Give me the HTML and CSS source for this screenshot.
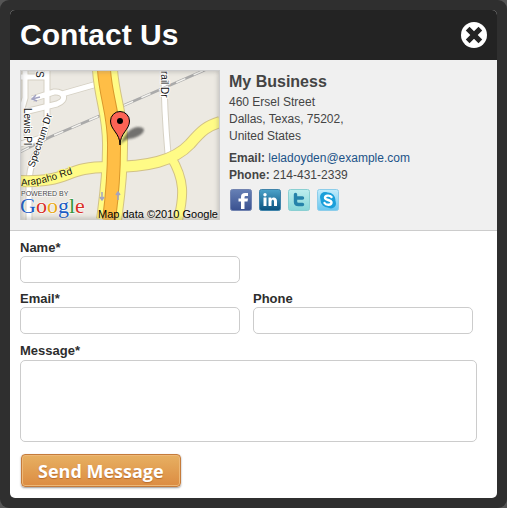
FILE: index.html
```html
<!DOCTYPE html>
<html lang="en">
<head>
<meta charset="utf-8">
<meta name="viewport" content="width=device-width, initial-scale=1">
<title>Contact Us</title>
<link rel="stylesheet" href="styles.css">
</head>
<body>
<main class="dialog">
  <div class="panel">
    <header class="header">
      <h1 class="title">Contact Us</h1>
      <button class="close" type="button" aria-label="Close">
        <svg viewBox="0 0 26 26" width="26" height="26">
          <circle cx="13" cy="13" r="13" fill="#fff"/>
          <path d="M8.500 4.800 13 9.300 17.500 4.800 21.200 8.500 16.700 13 21.200 17.500 17.500 21.200 13 16.700 8.500 21.200 4.800 17.500 9.300 13 4.800 8.500Z" fill="#232323"/>
        </svg>
      </button>
    </header>

    <section class="info">
      <svg class="map" viewBox="20 70 200 150" width="200" height="150" role="img" aria-label="Map">
        <defs>
          <filter id="blur" x="-30%" y="-50%" width="160%" height="200%"><feGaussianBlur stdDeviation="1"/></filter>
          <filter id="soft" x="-10%" y="-10%" width="120%" height="120%"><feGaussianBlur stdDeviation="2"/></filter>
        </defs>
        <rect x="20" y="70" width="200" height="150" fill="#ece9e2"/>
        <g fill="none">
          <path stroke="#d6d1c4" stroke-width="7" d="M25 70V98L21 112V140M47 70V118C47 140 31 152 29 180V220M20 77H46M20 113 57 104C68 100 64 91 54 92L32 99M62 94 97 84M164 70C164 95 165 120 168 154M20 144 45 137"/>
          <path stroke="#fff" stroke-width="5" d="M25 70V98L21 112V140M47 70V118C47 140 31 152 29 180V220M20 77H46M20 113 57 104C68 100 64 91 54 92L32 99M62 94 97 84M164 70C164 95 165 120 168 154M20 144 45 137"/>
          <path stroke="#aaa" stroke-width="2.600" d="M20 152 50 137 97 117 205 70"/>
          <path stroke="#f5f4f0" stroke-width="1.400" stroke-dasharray="10 9" d="M20 152 50 137 97 117 205 70"/>
          <g stroke="#d2c286">
            <path stroke-width="26" d="M105 70C107 99 116 116 115 148C115 178 112 197 109 220"/>
            <path stroke-width="12" d="M20 181C70 183 64 167 108 167C148 167 174 161 190 144C202 130 207 126 220 122"/>
            <path stroke-width="10" d="M171 157C185 180 184 196 178 220"/>
          </g>
          <g stroke="#fffb86">
            <path stroke-width="24" d="M105 70C107 99 116 116 115 148C115 178 112 197 109 220"/>
            <path stroke-width="10" d="M20 181C70 183 64 167 108 167C148 167 174 161 190 144C202 130 207 126 220 122"/>
            <path stroke-width="8" d="M171 157C185 180 184 196 178 220"/>
          </g>
          <path stroke="#d9972b" stroke-width="14" d="M104 70C106 99 115 116 114 148C114 178 112 197 109 220"/>
          <path stroke="#ffbe46" stroke-width="12" d="M104 70C106 99 115 116 114 148C114 178 112 197 109 220"/>
          <path stroke="#a3a3c2" stroke-width="1.500" d="M32 99 40 97M36 95 32 99 37 101M102 192V200M100 197 102 200 104 197M118 200V192M116 195 118 192 120 195"/>
        </g>
        <path d="M120 145C124 135 130 127 139 127C149 128 142 136 134 138C128 139 124 140 120 145Z" fill="#333" opacity=".65" filter="url(#blur)"/>
        <path d="M120 145C120 133 110.500 130 110.500 121A9.300 9.300 0 0 1 129.500 121C129.500 130 120 133 120 145Z" fill="#fc6355" stroke="#000"/>
        <circle cx="120" cy="121" r="3" fill="#000"/>
        <g class="road-name">
          <text transform="translate(36 71) rotate(90)">S</text>
          <text transform="translate(24 108) rotate(90)">Lewis Pl</text>
          <text transform="translate(34 168) rotate(-71)">Spectrum Dr</text>
          <text transform="translate(161 71) rotate(90)">rail Dr</text>
        </g>
        <path id="arapaho" fill="none" d="M21 186C48 184 54 179 80 172"/>
        <text class="road-name road-name-major"><textPath href="#arapaho">Arapaho Rd</textPath></text>
        <text class="powered" x="21" y="196">POWERED BY</text>
        <text class="google" x="20" y="213"><tspan fill="#1b5cc4">G</tspan><tspan fill="#d93025">o</tspan><tspan fill="#e9a914">o</tspan><tspan fill="#1b5cc4">g</tspan><tspan fill="#35963b">l</tspan><tspan fill="#d93025">e</tspan></text>
        <text class="copyright" x="218" y="218">Map data ©2010 Google</text>
        <rect x="20" y="70" width="200" height="150" fill="none" stroke="#777" stroke-width="3" opacity=".5" filter="url(#soft)"/>
        <path d="M20.500 220V70.500H219.500V220" fill="none" stroke="#ccc"/>
      </svg>

      <div class="details">
        <h2 class="business">My Business</h2>
        <address class="address">460 Ersel Street<br>Dallas, Texas, 75202,<br>United States</address>
        <p class="contact"><b>Email:</b> <a href="mailto:leladoyden@example.com">leladoyden@example.com</a><br><b>Phone:</b> 214-431-2339</p>
        <nav class="social" aria-label="Social links">
          <a href="#" aria-label="Facebook"><svg viewBox="0 0 22 22" width="22" height="22">
            <defs><linearGradient id="fb" x2="0" y2="1"><stop stop-color="#6680b5"/><stop offset="1" stop-color="#3a5190"/></linearGradient></defs>
            <rect x=".5" y=".5" width="21" height="21" rx="2" fill="url(#fb)" stroke="#7183b0"/>
            <path d="M11 20V12.500H8.500V9.500H11V8C11 5 12.500 4 15 4H18V7H16C14.800 7 14.500 7.500 14.500 8.500V9.500H18L17.500 12.500H14.500V20Z" fill="#fff"/></svg></a>
          <a href="#" aria-label="LinkedIn"><svg viewBox="0 0 22 22" width="22" height="22">
            <defs><linearGradient id="li" x2="0" y2="1"><stop stop-color="#4ba2c9"/><stop offset="1" stop-color="#0b527f"/></linearGradient></defs>
            <rect x=".5" y=".5" width="21" height="21" rx="2" fill="url(#li)" stroke="#3f83aa"/>
            <path d="M4.500 8.500H7.500V17H4.500ZM9.500 8.500H12.300V9.700C14 7.500 18 8 18 12V17H15V12.500C15 10 12.500 10.200 12.500 12.500V17H9.500Z" fill="#fff"/><circle cx="6" cy="5.700" r="1.700" fill="#fff"/></svg></a>
          <a href="#" aria-label="Twitter"><svg viewBox="0 0 22 22" width="22" height="22">
            <defs><linearGradient id="tw" x2="0" y2="1"><stop stop-color="#bdeeee"/><stop offset="1" stop-color="#86d6d8"/></linearGradient></defs>
            <rect x=".5" y=".5" width="21" height="21" rx="2" fill="url(#tw)" stroke="#8acfd2"/>
            <path d="M7.500 5.500V13Q7.500 15.500 10.500 15.500H14.500M8 9H14.500" fill="none" stroke="#2583aa" stroke-width="3.400" stroke-linecap="round"/></svg></a>
          <a href="#" aria-label="Skype"><svg viewBox="0 0 22 22" width="22" height="22">
            <defs><linearGradient id="sk" x2="0" y2="1"><stop stop-color="#c2ecfb"/><stop offset="1" stop-color="#67c6ef"/></linearGradient></defs>
            <rect x=".5" y=".5" width="21" height="21" rx="2" fill="url(#sk)" stroke="#8ccdea"/>
            <circle cx="8" cy="8" r="5" fill="#1a9fda"/><circle cx="14" cy="14.500" r="5" fill="#1a9fda"/><circle cx="11" cy="11" r="7.500" fill="#1a9fda"/>
            <path d="M14.500 8C13 6 8 6 8 8.800C8 11.500 14.500 10.500 14.500 13.500C14.500 16.500 9 16.500 7.500 14" fill="none" stroke="#fff" stroke-width="2.400" stroke-linecap="round"/></svg></a>
        </nav>
      </div>
    </section>

    <form class="form">
      <div class="field name"><label for="name">Name*</label><input id="name" type="text" required></div>
      <div class="field"><label for="email">Email*</label><input id="email" type="email" required></div>
      <div class="field"><label for="phone">Phone</label><input id="phone" type="tel"></div>
      <div class="field message"><label for="message">Message*</label><textarea id="message" required></textarea></div>
      <button class="send" type="submit">Send Message</button>
    </form>
  </div>
</main>
</body>
</html>
```
FILE: styles.css
```css
* {
  box-sizing: border-box;
}

body {
  margin: 0;
  background: #555;
  color: #444;
  font: 12px/17px "Liberation Sans", Arial, sans-serif;
}

h1, h2, p {
  margin: 0;
}

.dialog {
  min-height: 100vh;
  display: flex;
  padding: 10px;
  background: #2f2f2f;
  border-radius: 9px;
}

.panel {
  flex: 1;
  min-width: 0;
  background: #fff;
  border-radius: 5px;
  overflow: hidden;
}

.header {
  display: flex;
  align-items: center;
  justify-content: space-between;
  height: 50px;
  padding: 0 10px;
  background: #232323;
}

.title {
  color: #fff;
  font-size: 30px;
  line-height: 52px;
}

.close {
  display: block;
  padding: 0;
  border: 0;
  background: none;
  cursor: pointer;
}

.close svg, .social svg {
  display: block;
}

.info {
  display: flex;
  gap: 9px;
  padding: 10px;
  background: #f0f0f0;
  border-bottom: 1px solid #ccc;
}

.map {
  display: block;
  flex: none;
}

.map text {
  font-family: "Liberation Sans", Arial, sans-serif;
}

.map .road-name {
  font-size: 10px;
  fill: #111;
  stroke: #fff;
  stroke-width: 2px;
  paint-order: stroke;
}

.map .road-name-major {
  stroke: #fffb86;
}

.map .powered {
  font-size: 7px;
  fill: #444;
  stroke: #fff;
  stroke-width: 1px;
  paint-order: stroke;
}

.map .google {
  font: 22px "Liberation Serif", serif;
  stroke: #fff;
  stroke-width: 1px;
  paint-order: stroke;
}

.map .copyright {
  font-size: 11px;
  text-anchor: end;
  fill: #000;
}

.business {
  font-size: 16px;
  line-height: 24px;
}

.address {
  font-style: normal;
}

.contact {
  margin-top: 5px;
}

.contact a {
  color: #1c5388;
  text-decoration: none;
}

.social {
  display: flex;
  gap: 7px;
  margin-top: 5px;
  padding-left: 1px;
}

.form {
  display: grid;
  grid-template-columns: 1fr 1fr;
  column-gap: 13px;
  row-gap: 7px;
  padding: 8px 24px 10px 10px;
}

.field {
  display: flex;
  flex-direction: column;
}

.name {
  grid-column: 1;
}

.name + .field {
  grid-column: 1;
}

.message {
  grid-column: 1 / -1;
  margin: 1px -4px 0 0;
}

.field label {
  color: #2d2d2d;
  font-size: 13px;
  font-weight: bold;
}

.field input, .field textarea {
  display: block;
  width: 100%;
  height: 27px;
  padding: 4px 6px;
  border: 1px solid #ccc;
  border-radius: 5px;
  background: #fff;
  font: inherit;
}

.field textarea {
  height: 82px;
  margin-top: 1px;
  resize: none;
}

.send {
  grid-column: 1 / -1;
  justify-self: start;
  height: 33px;
  margin: 5px 0 0 1px;
  padding: 0 16px;
  border: 1px solid #c57b3b;
  border-radius: 4px;
  background: linear-gradient(#e7b062, #dc8c42);
  box-shadow: inset 0 0 0 1px #edb877, 0 1px 2px #999;
  color: #fff;
  font: bold 18px/24px "Open Sans", "Noto Sans", sans-serif;
  text-shadow: 0 1px 1px #b76b2c;
  cursor: pointer;
}
```
